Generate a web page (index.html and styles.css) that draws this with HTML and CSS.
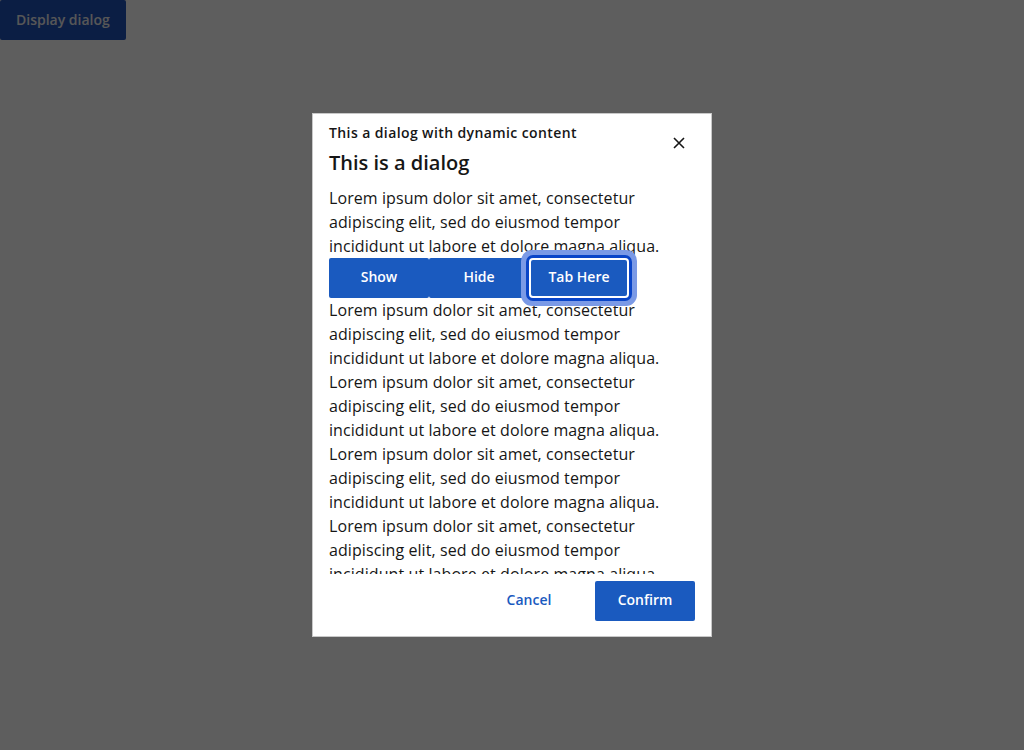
FILE: index.html
```html
<!DOCTYPE html>
<html lang="en">
<head>
<meta charset="utf-8">
<title>Dialog</title>
<link rel="stylesheet" href="styles.css">
</head>
<body>
<button class="btn trigger">Display dialog</button>
<div class="overlay">
  <div class="dialog" role="dialog">
    <div class="header">
      <div class="subtitle">This a dialog with dynamic content</div>
      <div class="title">This is a dialog</div>
      <button class="close" aria-label="Close">
        <svg width="12" height="12" viewBox="0 0 12 12"><path d="M1 1L11 11M11 1L1 11" stroke="#161616" stroke-width="1.6" fill="none"/></svg>
      </button>
    </div>
    <div class="content">
      <p class="para">Lorem ipsum dolor sit amet, consectetur adipiscing elit, sed do eiusmod tempor incididunt ut labore et dolore magna aliqua.</p>
      <div class="group">
        <button class="btn gbtn">Show</button>
        <button class="btn gbtn">Hide</button>
        <button class="btn gbtn focused">Tab Here</button>
      </div>
      <p class="para">Lorem ipsum dolor sit amet, consectetur adipiscing elit, sed do eiusmod tempor incididunt ut labore et dolore magna aliqua.</p>
      <p class="para">Lorem ipsum dolor sit amet, consectetur adipiscing elit, sed do eiusmod tempor incididunt ut labore et dolore magna aliqua.</p>
      <p class="para">Lorem ipsum dolor sit amet, consectetur adipiscing elit, sed do eiusmod tempor incididunt ut labore et dolore magna aliqua.</p>
      <p class="para">Lorem ipsum dolor sit amet, consectetur adipiscing elit, sed do eiusmod tempor incididunt ut labore et dolore magna aliqua.</p>
    </div>
    <div class="footer">
      <button class="btn ghost">Cancel</button>
      <button class="btn primary">Confirm</button>
    </div>
  </div>
</div>
</body>
</html>
```
FILE: styles.css
```css
html, body {
  margin: 0;
  padding: 0;
  background: #ffffff;
  font-family: "Open Sans", "Noto Sans", sans-serif;
  color: #161616;
}

.btn {
  font-family: "Open Sans", "Noto Sans", sans-serif;
  font-size: 14px;
  font-weight: 600;
  line-height: 20px;
  border: none;
  border-radius: 2px;
  cursor: pointer;
  margin: 0;
  padding: 0 0 3px;
}

.trigger {
  display: block;
  height: 40px;
  padding: 0 16px;
  background: #2051b8;
  color: #ececec;
}

.overlay {
  position: fixed;
  inset: 0;
  background: rgba(0, 0, 0, 0.63);
  display: flex;
  align-items: center;
  justify-content: center;
}

.dialog {
  box-sizing: border-box;
  width: 400px;
  height: 524px;
  background: #ffffff;
  border: 1px solid #c8c8c8;
  display: flex;
  flex-direction: column;
}

.header {
  position: relative;
  padding: 9px 16px 0;
}

.subtitle {
  font-size: 14px;
  line-height: 20px;
  font-weight: 600;
  letter-spacing: 0.4px;
}

.title {
  margin-top: 6px;
  font-size: 20px;
  line-height: 28px;
  font-weight: 600;
}

.close {
  position: absolute;
  top: 17px;
  right: 20px;
  width: 24px;
  height: 24px;
  padding: 0;
  border: none;
  background: transparent;
  display: flex;
  align-items: center;
  justify-content: center;
}

.content {
  flex: 1;
  min-height: 0;
  overflow: hidden;
  padding: 9px 16px 0;
}

.para {
  margin: 0;
  max-width: 348px;
  font-size: 16px;
  line-height: 24px;
  letter-spacing: 0.08px;
}

.group {
  display: flex;
}

.gbtn {
  width: 100px;
  height: 40px;
  background: #1a5abf;
  color: #ffffff;
}

.focused {
  position: relative;
  box-shadow: inset 0 0 0 2px #ffffff, 0 0 0 3px #0a45c8, 0 0 0 8px #7b9ae6;
  border-radius: 4px;
}

.footer {
  display: flex;
  justify-content: flex-end;
  gap: 16px;
  padding: 7px 16px 15px;
}

.ghost {
  width: 100px;
  height: 40px;
  background: transparent;
  color: #1a5abf;
}

.primary {
  width: 100px;
  height: 40px;
  background: #1a5abf;
  color: #ffffff;
}
```
